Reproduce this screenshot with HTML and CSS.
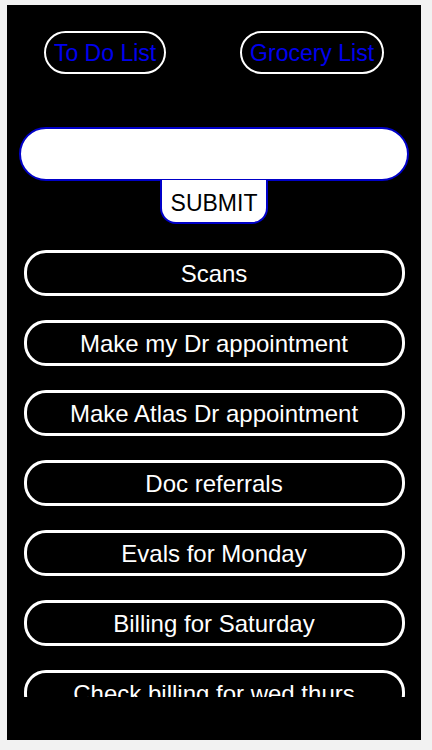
FILE: index.html
```html
<!DOCTYPE html>
<html>
<head>
<meta charset="utf-8">
<link rel="stylesheet" href="styles.css">
</head>
<body>
<div class="app">
  <nav class="nav">
    <a class="nav-btn" href="#">To Do List</a>
    <a class="nav-btn" href="#">Grocery List</a>
  </nav>
  <form class="form">
    <input class="field" type="text">
    <button class="submit" type="button">SUBMIT</button>
  </form>
  <div class="list">
    <div class="item">Scans</div>
    <div class="item">Make my Dr appointment</div>
    <div class="item">Make Atlas Dr appointment</div>
    <div class="item">Doc referrals</div>
    <div class="item">Evals for Monday</div>
    <div class="item">Billing for Saturday</div>
    <div class="item">Check billing for wed thurs</div>
  </div>
</div>
</body>
</html>
```
FILE: styles.css
```css
html, body {
  margin: 0;
  padding: 0;
}
body {
  background: #f2f2f2;
  font-family: "Liberation Sans", Arial, sans-serif;
}
.app {
  margin: 5px 11px 10px 7px;
  height: 735px;
  background: #000;
  display: flex;
  flex-direction: column;
  box-sizing: border-box;
  padding-top: 26px;
}
.nav {
  display: flex;
  justify-content: space-around;
  height: 43px;
}
.nav-btn {
  display: flex;
  align-items: center;
  justify-content: center;
  box-sizing: border-box;
  height: 43px;
  padding: 2px 8px 0 8px;
  border: 2px solid #fff;
  border-radius: 22px;
  color: #0000ee;
  text-decoration: none;
  font-size: 23px;
}
.form {
  margin: 53px 0 0 0;
  display: flex;
  flex-direction: column;
  align-items: center;
}
.field {
  box-sizing: border-box;
  width: 390px;
  height: 54px;
  margin: 0;
  border: 2px solid #0000c8;
  border-radius: 27px;
  background: #fff;
  outline: none;
}
.submit {
  box-sizing: border-box;
  width: 108px;
  height: 44px;
  margin-top: -1px;
  border: 2px solid #0000c8;
  border-top: none;
  border-radius: 0 0 16px 16px;
  background: #fff;
  color: #000;
  font-family: "Liberation Sans", Arial, sans-serif;
  font-size: 23px;
  padding: 4px 0 0 0;
}
.list {
  margin: 26px 0 0 0;
  height: 447px;
  overflow: hidden;
  display: flex;
  flex-direction: column;
  align-items: center;
  gap: 24px;
}
.item {
  flex: none;
  box-sizing: border-box;
  width: 381px;
  height: 46px;
  padding-top: 1px;
  border: 3px solid #fff;
  border-radius: 22px;
  color: #fff;
  font-size: 24px;
  display: flex;
  align-items: center;
  justify-content: center;
}
```
